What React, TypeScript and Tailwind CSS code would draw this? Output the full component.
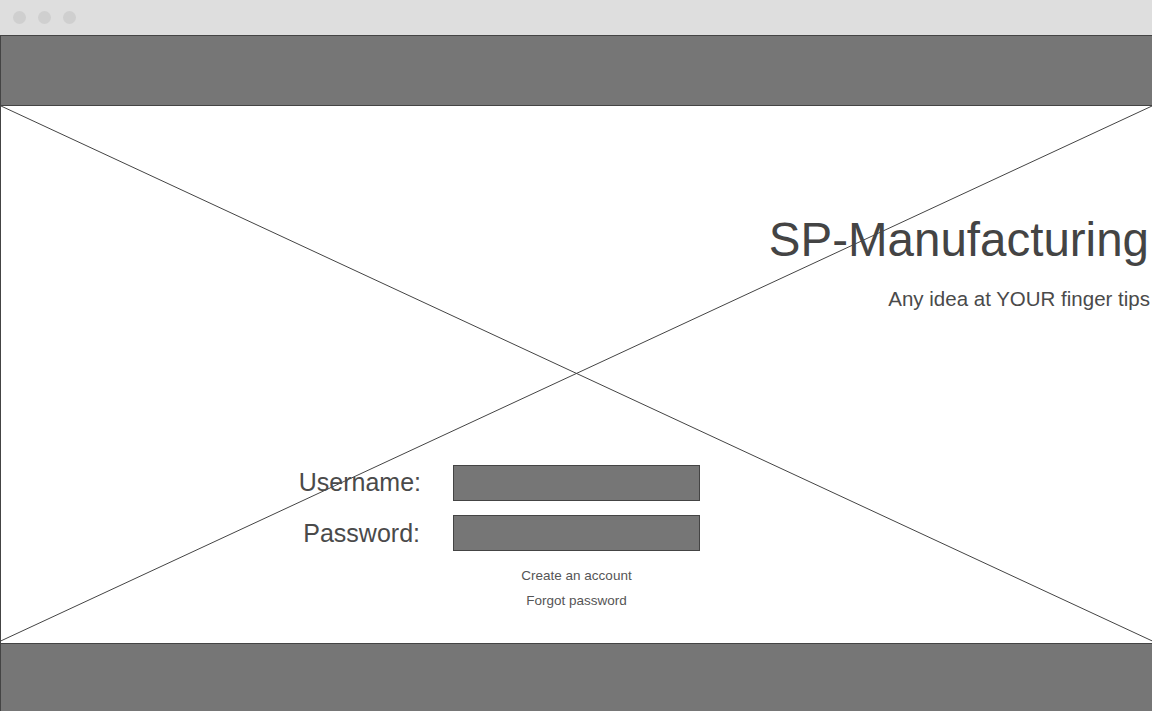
export default function App() {
  return (
    <div className="w-[1152px] h-[711px] flex flex-col bg-white overflow-hidden font-['Liberation_Sans',Arial,sans-serif]">
      {/* browser chrome */}
      <div className="h-[35px] shrink-0 bg-[#dedede] flex items-center gap-[12px] pl-[13px]">
        <div className="w-[13px] h-[13px] rounded-full bg-[#cfcfcf]"></div>
        <div className="w-[13px] h-[13px] rounded-full bg-[#cfcfcf]"></div>
        <div className="w-[13px] h-[13px] rounded-full bg-[#cfcfcf]"></div>
      </div>

      {/* header */}
      <div className="h-[71px] shrink-0 bg-[#767676] border-y border-l border-[#444]"></div>

      {/* main */}
      <div className="relative h-[537px] shrink-0 border-l border-[#444]">
        <svg
          className="absolute inset-0 w-full h-full"
          viewBox="0 0 100 100"
          preserveAspectRatio="none"
        >
          <line x1="0" y1="0" x2="100" y2="99.6" stroke="#444" strokeWidth="1" vectorEffect="non-scaling-stroke" />
          <line x1="0" y1="99.6" x2="100" y2="0" stroke="#444" strokeWidth="1" vectorEffect="non-scaling-stroke" />
        </svg>

        <div className="relative flex flex-col">
          <div className="pt-[107px] flex flex-col items-end text-[#444]">
            <h1 className="text-[47.5px] leading-[1.117] pr-[3px] whitespace-nowrap">SP-Manufacturing</h1>
            <p className="mt-[22px] text-[20.5px] leading-[1.117] pr-[2px] text-[#4a4a4a] whitespace-nowrap">
              Any idea at YOUR finger tips
            </p>
          </div>

          <div className="mt-[154px] grid grid-cols-[1fr_247px_1fr] gap-y-[14px] items-center">
            <label className="h-[36px] flex items-center justify-end pr-[32px] text-[25px] leading-none text-[#4a4a4a]">Username:</label>
            <div className="h-[36px] bg-[#767676] border border-[#444]"></div>
            <div></div>
            <label className="h-[36px] flex items-center justify-end pr-[33px] pt-[2px] text-[25px] leading-none text-[#4a4a4a]">Password:</label>
            <div className="h-[36px] bg-[#767676] border border-[#444]"></div>
            <div></div>
          </div>

          <div className="mt-[17px] flex flex-col items-center gap-[10px] text-[13.5px] leading-[1.117] text-[#555]">
            <a>Create an account</a>
            <a>Forgot password</a>
          </div>
        </div>
      </div>

      {/* footer */}
      <div className="flex-1 bg-[#767676] border-t border-l border-[#444]"></div>
    </div>
  );
}
